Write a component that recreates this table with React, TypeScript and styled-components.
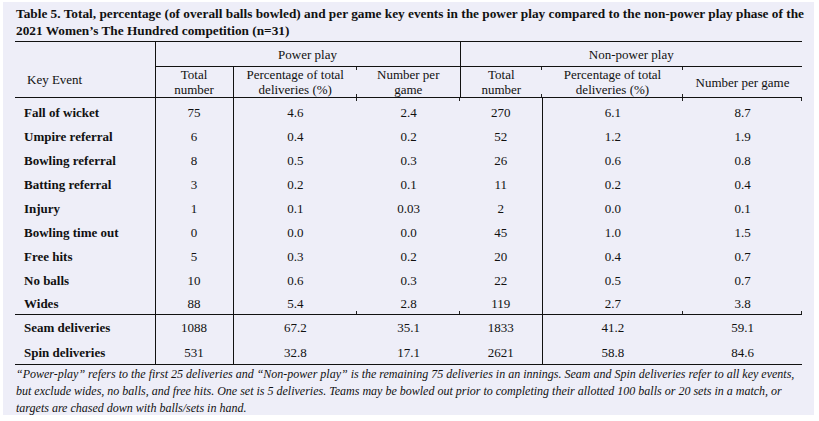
import React from 'react';
import styled, { createGlobalStyle, css } from 'styled-components';

const GlobalStyle = createGlobalStyle`
  html, body {
    margin: 0;
    padding: 0;
    background: #fff;
  }
`;

type Row = {
  label: string;
  values: string[];
};

const eventRows: Row[] = [
  { label: 'Fall of wicket', values: ['75', '4.6', '2.4', '270', '6.1', '8.7'] },
  { label: 'Umpire referral', values: ['6', '0.4', '0.2', '52', '1.2', '1.9'] },
  { label: 'Bowling referral', values: ['8', '0.5', '0.3', '26', '0.6', '0.8'] },
  { label: 'Batting referral', values: ['3', '0.2', '0.1', '11', '0.2', '0.4'] },
  { label: 'Injury', values: ['1', '0.1', '0.03', '2', '0.0', '0.1'] },
  { label: 'Bowling time out', values: ['0', '0.0', '0.0', '45', '1.0', '1.5'] },
  { label: 'Free hits', values: ['5', '0.3', '0.2', '20', '0.4', '0.7'] },
  { label: 'No balls', values: ['10', '0.6', '0.3', '22', '0.5', '0.7'] },
  { label: 'Wides', values: ['88', '5.4', '2.8', '119', '2.7', '3.8'] },
];

const deliveryRows: Row[] = [
  { label: 'Seam deliveries', values: ['1088', '67.2', '35.1', '1833', '41.2', '59.1'] },
  { label: 'Spin deliveries', values: ['531', '32.8', '17.1', '2621', '58.8', '84.6'] },
];

const colWidths = [140, 78, 124, 103, 82, 141, 119];

// value columns followed by a solid rule / by a faint tick
const isDivider = (i: number) => i === 0 || i === 3;
const hasTick = (i: number) => i === 1 || i === 2 || i === 4 || i === 5;

const App = () => {
  return (
    <>
      <GlobalStyle />
      <Panel>
        <Caption>
          Table 5. Total, percentage (of overall balls bowled) and per game key events in the power
          play compared to the non-power play phase of the
          <br />
          2021 Women’s The Hundred competition (n=31)
        </Caption>
        <Table>
          <colgroup>
            {colWidths.map((w, i) => (
              <col key={i} style={{ width: w }} />
            ))}
          </colgroup>
          <thead>
            <tr>
              <KeyHead rowSpan={2}>Key Event</KeyHead>
              <GroupHead colSpan={3} $divider>
                Power play
              </GroupHead>
              <GroupHead colSpan={3}>Non-power play</GroupHead>
            </tr>
            <tr>
              <SubHead $divider>
                Total
                <br />
                number
              </SubHead>
              <SubHead $tick>
                Percentage of total
                <br />
                deliveries (%)
              </SubHead>
              <SubHead $divider>
                Number per
                <br />
                game
              </SubHead>
              <SubHead $tick>
                Total
                <br />
                number
              </SubHead>
              <SubHead $tick>
                Percentage of total
                <br />
                deliveries (%)
              </SubHead>
              <SubHead>Number per game</SubHead>
            </tr>
          </thead>
          <EventBody>
            {eventRows.map((row, r) => (
              <tr key={row.label}>
                <Label>{row.label}</Label>
                {row.values.map((v, i) => (
                  <Cell
                    key={i}
                    $divider={isDivider(i)}
                    $tickTop={r === 0 && hasTick(i)}
                    $tickBottom={r === eventRows.length - 1 && hasTick(i)}
                  >
                    {v}
                  </Cell>
                ))}
              </tr>
            ))}
          </EventBody>
          <DeliveryBody>
            {deliveryRows.map((row) => (
              <tr key={row.label}>
                <Label>{row.label}</Label>
                {row.values.map((v, i) => (
                  <Cell key={i} $divider={isDivider(i)}>
                    {v}
                  </Cell>
                ))}
              </tr>
            ))}
          </DeliveryBody>
        </Table>
        <Footnote>
          “Power-play” refers to the first 25 deliveries and “Non-power play” is the remaining 75
          deliveries in an innings. Seam and Spin deliveries refer to all key events,
          <br />
          but exclude wides, no balls, and free hits. One set is 5 deliveries. Teams may be bowled
          out prior to completing their allotted 100 balls or 20 sets in a match, or
          <br />
          targets are chased down with balls/sets in hand.
        </Footnote>
      </Panel>
    </>
  );
};

export default App;

const tickTop = 'linear-gradient(#222, #222) right top / 1px 3px no-repeat';
const tickBottom = 'linear-gradient(#222, #222) right bottom / 1px 3px no-repeat';

const Panel = styled.div`
  width: 811px;
  height: 413px;
  margin: 2px 0 0 3px;
  padding: 3px 12px 0;
  box-sizing: border-box;
  background-color: #eeeef8;
  color: #111;
  font-family: 'Liberation Serif', 'DejaVu Serif', serif;
`;

const Caption = styled.div`
  font-size: 13.3px;
  font-weight: bold;
  line-height: 17px;
  white-space: nowrap;
  padding-left: 1px;
  margin-bottom: 2px;
`;

const Table = styled.table`
  width: 787px;
  table-layout: fixed;
  border-collapse: collapse;
  border-top: 1.5px solid #111;
  border-bottom: 1.5px solid #111;
  font-size: 13px;
  line-height: 15px;
`;

const KeyHead = styled.th`
  padding: 20px 0 0 12px;
  text-align: left;
  font-weight: normal;
  vertical-align: middle;
  border-right: 1px solid #111;
  border-bottom: 1.5px solid #111;
`;

const GroupHead = styled.th<{ $divider?: boolean }>`
  height: 24px;
  padding: 0;
  text-align: center;
  font-weight: normal;
  border-bottom: 1px solid #111;
  border-right: ${(p) => (p.$divider ? '1px solid #111' : 'none')};
`;

const SubHead = styled.th<{ $divider?: boolean; $tick?: boolean }>`
  height: 30px;
  padding: 0;
  text-align: center;
  font-weight: normal;
  border-bottom: 1.5px solid #111;
  border-right: ${(p) => (p.$divider ? '1px solid #111' : 'none')};
  ${(p) =>
    p.$tick &&
    css`
      background: ${tickTop}, ${tickBottom};
    `}
`;

const Label = styled.td`
  height: 24px;
  padding: 0 0 0 9px;
  font-weight: bold;
  white-space: nowrap;
  border-right: 1px solid #111;
`;

const Cell = styled.td<{ $divider?: boolean; $tickTop?: boolean; $tickBottom?: boolean }>`
  height: 24px;
  padding: 0;
  text-align: center;
  border-right: ${(p) => (p.$divider ? '1px solid #111' : 'none')};
  ${(p) =>
    p.$tickTop &&
    css`
      background: ${tickTop};
    `}
  ${(p) =>
    p.$tickBottom &&
    css`
      background: ${tickBottom};
    `}
`;

const EventBody = styled.tbody`
  border-bottom: 1.5px solid #111;

  tr:first-child td {
    height: 24px;
    padding-top: 2px;
  }

  tr:last-child td {
    height: 22px;
  }
`;

const DeliveryBody = styled.tbody`
  tr td {
    height: 24px;
  }

  tr:first-child td {
    height: 25px;
  }
`;

const Footnote = styled.p`
  margin: 0;
  padding: 1px 0 0 1px;
  font-size: 12px;
  font-style: italic;
  line-height: 17px;
  white-space: nowrap;
`;
